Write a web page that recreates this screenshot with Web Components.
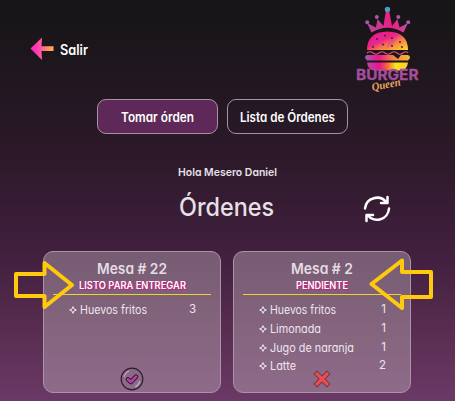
<!DOCTYPE html>
<html lang="es"><head><meta charset="utf-8"><title>Órdenes</title>
<style>
html,body{margin:0;height:100%}
body{overflow:hidden;font-family:Inter,"Open Sans",sans-serif;font-feature-settings:"cv11";color:#e7e0e7}
</style></head><body>
<orders-page></orders-page>
<script>
const define=(name,html,after)=>customElements.define(name,class extends HTMLElement{
  connectedCallback(){if(this.shadowRoot)return;this.attachShadow({mode:'open'}).innerHTML=typeof html==='function'?html(this):html;if(after)after(this);}
});
/* Text set to a given advance width */
define('fit-text',`<style>:host{display:block;white-space:nowrap;overflow:visible}span{display:inline-block;transform-origin:0 50%}</style><span></span>`,el=>{
  const s=el.shadowRoot.querySelector('span'),w=+el.getAttribute('w');
  s.textContent=el.getAttribute('text');
  el.style.width=w+'px';
  s.style.transform=`scaleX(${w/s.getBoundingClientRect().width})`;
});
define('burger-logo',`<style>:host{display:block;width:66px;height:89px}svg{display:block;overflow:visible}</style>
<svg width="66" height="94" viewBox="354 4 66 94">
<defs><linearGradient id="b" x1="0" y1="0" x2="1" y2="1"><stop offset="0" stop-color="#ec168f"/><stop offset=".42" stop-color="#ee2382"/><stop offset=".62" stop-color="#f47a4b"/><stop offset="1" stop-color="#fbdc22"/></linearGradient>
<linearGradient id="c" x1="0" y1="0" x2="1" y2="0"><stop offset="0" stop-color="#ad4a9b"/><stop offset=".35" stop-color="#d82f91"/><stop offset=".6" stop-color="#ef1c83"/><stop offset="1" stop-color="#b94f9a"/></linearGradient>
<linearGradient id="d"><stop offset="0" stop-color="#9860ac"/><stop offset=".3" stop-color="#ec168c"/><stop offset=".65" stop-color="#f58a3c"/><stop offset="1" stop-color="#f4ba35"/></linearGradient>
<linearGradient id="e"><stop offset="0" stop-color="#b84aa0"/><stop offset=".3" stop-color="#ed128e"/><stop offset=".5" stop-color="#f5683c"/><stop offset=".7" stop-color="#f7e51e"/><stop offset="1" stop-color="#f6cf2c"/></linearGradient></defs>
<path d="M371.500 31.500L367 22L376 26.500L377.500 18L383.500 25L386 9H389L392 25L397.500 18L399.500 26.500L408 22L403.500 31.500Q387.500 22 371.500 31.500Z" fill="url(#c)"/>
<g fill="#a65aa5"><circle cx="387.500" cy="8.500" r="2.700" fill="#4b9eb9"/><circle cx="376.800" cy="16" r="2"/><circle cx="398.300" cy="16" r="2"/><circle cx="367.200" cy="21.300" r="2"/><circle cx="408.200" cy="21.300" r="2"/></g>
<path d="M367 49Q367 31 387.500 30.500Q408 31 408 49Z" fill="url(#b)"/>
<path d="M374 36L386 31L381 42L370 46ZM391 34L398 32L394 43L386 48Z" fill="#d92cb0" opacity=".35"/>
<g fill="#46152c"><circle cx="377" cy="38" r=".9"/><circle cx="385" cy="34.500" r=".9"/><circle cx="392" cy="37" r=".9"/><circle cx="400" cy="41" r=".9"/><circle cx="373" cy="46" r=".9"/><circle cx="383" cy="43.500" r=".9"/><circle cx="392" cy="45" r=".9"/><circle cx="402" cy="46" r=".9"/></g>
<path d="M367 52q3-2.500 6 0t6 0t6 0t6 0t6 0t6 0t5 0" fill="none" stroke="#dc507c" stroke-width="1.200"/>
<path d="M367 54H393L398 58L401 54H408Q412 56 408 59.500H367Q363 56 367 54Z" fill="url(#d)"/>
<path d="M367 61.500H408Q407 69.500 400 69.500H375Q368 69.500 367 61.500Z" fill="url(#e)"/>
<text x="356" y="78.500" font-family="Inter" font-weight="700" font-size="14" textLength="62.500" lengthAdjust="spacingAndGlyphs" fill="#a64d9c" stroke="#a64d9c" stroke-width=".3">BURGER</text>
<text x="372.500" y="90" transform="rotate(-11 372 90)" font-family="Liberation Serif" font-style="italic" font-weight="700" font-size="11.500" textLength="29" lengthAdjust="spacingAndGlyphs" fill="#eda360">Queen</text>
</svg>`);
define('back-link',`<style>:host{display:flex;align-items:center;gap:6px;color:#fff;font-weight:600;font-size:14px}</style>
<svg width="24" height="24"><defs><linearGradient id="g"><stop offset=".2" stop-color="#ff2fc0"/><stop offset="1" stop-color="#ffb443"/></linearGradient></defs><path d="M.5 11.500L12 .5L11.500 9.300H23.500V14H11.500L12 23Z" fill="url(#g)"/></svg><fit-text w="28" text="Salir"></fit-text>`);
define('nav-button',el=>`<style>:host{box-sizing:border-box;width:121px;height:35px;border:1px solid #a493a4;border-radius:9px;display:flex;align-items:center;justify-content:center;color:#fff;font-weight:600;font-size:13px}:host([active]){background:#5e2958}</style><fit-text w="${el.getAttribute('w')}" text="${el.getAttribute('label')}"></fit-text>`);
define('reload-icon',`<style>:host{display:block;width:28px;height:28px}svg{display:block}</style><svg width="28" height="28" fill="none" stroke="#fff" stroke-width="2.5" stroke-linejoin="round" stroke-linecap="round"><path d="M2 13.500A12 12 0 0 1 23.500 7.500M24.500 2V8H18M26 13.500A12 12 0 0 1 4.500 20M3.500 26V20H10"/></svg>`);
define('order-item',el=>`<style>:host{display:flex;justify-content:space-between;align-items:center;height:18.7px;font-size:11.5px;color:#eee5ed}div{display:flex;align-items:center;gap:3px}b{font-weight:400;position:relative;top:-1px}svg{display:block}</style>
<div><svg width="8" height="8"><path d="M4 .6L5 3L7.400 4L5 5L4 7.400L3 5L.6 4L3 3Z" fill="none" stroke="#eee5ed"/></svg><fit-text w="${el.getAttribute('w')}" text="${el.getAttribute('name')}"></fit-text></div><b>${el.getAttribute('qty')}</b>`);
define('order-card',el=>`<style>:host{box-sizing:border-box;display:flex;flex-direction:column;align-items:center;width:178px;height:142px;border:1px solid #ab93aa;border-radius:10px;background:rgba(200,185,195,.4);padding-top:8px;position:relative}
.t{font-size:15px;line-height:18px;font-weight:600;color:#e3dce3}.s{font-size:10px;line-height:14px;font-weight:600;color:#fff;text-shadow:0 0 1px #d21880,1px 1px 1px #d21880;margin-bottom:2px}
hr{width:158px;height:1px;border:0;background:#eed32d;margin:0}
.l{align-self:stretch;padding:6px 24px 0 25px}
.f{position:absolute;bottom:1px;left:76px}</style>
<fit-text class="t" w="${el.getAttribute('tw')}" text="${el.getAttribute('table')}"></fit-text><fit-text class="s" w="${el.getAttribute('sw')}" text="${el.getAttribute('status')}"></fit-text><hr><div class="l"><slot></slot></div><div class="f"><slot name="action"></slot></div>`);
define('done-icon',`<style>:host{display:block}svg{display:block}</style><svg width="24" height="24" fill="none"><circle cx="12" cy="12" r="10.800" stroke="#2d1d2e" stroke-width="1.200"/><path d="M4 10Q5 6 9 4M20 14Q19 18 15 20" stroke="#c2a9c2" stroke-width="1.200"/><path d="M8 12.500L11 15L16 9.700" stroke="#321931" stroke-width="4.600" stroke-linecap="round" stroke-linejoin="round"/><path d="M8 12.500L11 15L16 9.700" stroke="#b443a4" stroke-width="2.600" stroke-linecap="round" stroke-linejoin="round"/></svg>`);
define('cancel-icon',`<style>:host{display:block}svg{display:block}</style><svg width="24" height="24" fill="none" stroke-linecap="square"><path d="M7 7L17 17M17 7L7 17" stroke="#683545" stroke-width="5"/><path d="M7 7L17 17M17 7L7 17" stroke="#ef4a4f" stroke-width="3.200"/></svg>`);
define('pointer-arrow',el=>`<style>:host{position:absolute}svg{display:block}</style><svg width="66" height="54" fill="none" stroke="#ffc90e" stroke-width="4" stroke-linejoin="round"><path d="${el.getAttribute('shape')}"/></svg>`);
define('orders-page',`<style>
:host{display:flex;flex-direction:column;box-sizing:border-box;position:relative;width:455px;height:401px;background:linear-gradient(#171517,#1a161a 10%,#2d192a 40%,#432040 65%,#592d51 83%,#6b3966)}
header{display:flex;justify-content:space-between;padding:5px 35px 0 30px;height:94px;box-sizing:border-box}
back-link{height:24px;margin-top:32px}
nav{display:flex;gap:9px;padding:5px 0 0 97px}
.h{display:flex;flex-direction:column;align-items:center;margin-top:30px}
.hi{font-size:11px;line-height:17px;font-weight:600}
.title{display:grid;grid-template-columns:179px 95px 1fr;align-items:center;height:52px;width:455px;font-size:25px;font-weight:500}
reload-icon{margin-left:88.5px;margin-top:3px}
main{display:flex;gap:12px;padding:18px 0 0 43px}
.a{left:14px;top:259px}.b{left:369px;top:257px}
</style>
<header><back-link></back-link><burger-logo></burger-logo></header>
<nav><nav-button active w="73" label="Tomar órden"></nav-button><nav-button w="95" label="Lista de Órdenes"></nav-button></nav>
<div class="h"><fit-text class="hi" w="99" text="Hola Mesero Daniel"></fit-text><div class="title"><i></i><fit-text w="95" text="Órdenes"></fit-text><reload-icon></reload-icon></div></div>
<main>
<order-card table="Mesa # 22" tw="70" status="LISTO PARA ENTREGAR" sw="107"><order-item name="Huevos fritos" w="67" qty="3"></order-item><done-icon slot="action"></done-icon></order-card>
<order-card table="Mesa # 2" tw="62" status="PENDIENTE" sw="52"><order-item name="Huevos fritos" w="66" qty="1"></order-item><order-item name="Limonada" w="51" qty="1"></order-item><order-item name="Jugo de naranja" w="84" qty="1"></order-item><order-item name="Latte" w="26" qty="2"></order-item><cancel-icon slot="action"></cancel-icon></order-card>
</main><pointer-arrow class="a" shape="M2 15H30.500V4L58 26L30.500 48V37H2Z"></pointer-arrow><pointer-arrow class="b" shape="M62 15H33V3.500L2.500 27L33 51V40H62Z"></pointer-arrow>`);
</script></body></html>
